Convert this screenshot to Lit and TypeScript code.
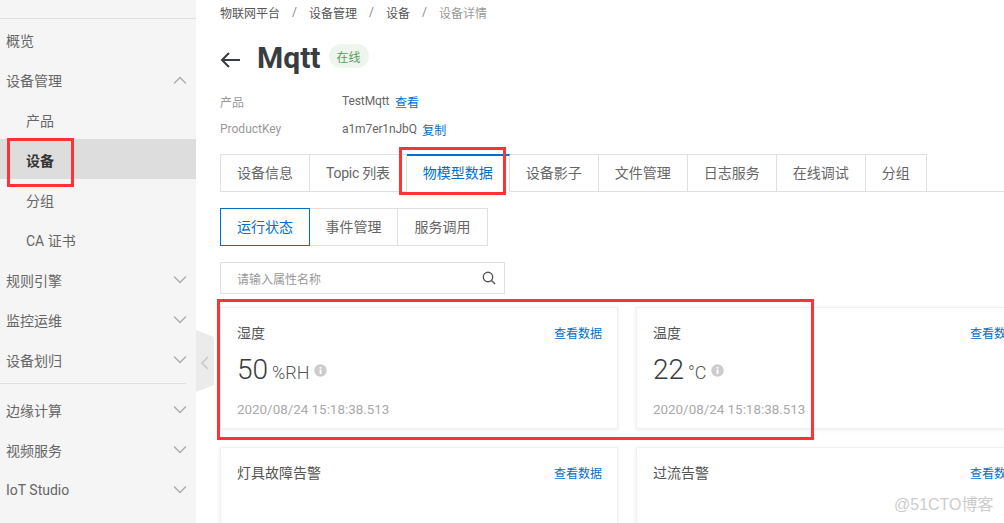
import { LitElement, html, css } from "lit";
import { customElement } from "lit/decorators.js";

const chevron = (up: boolean) => html`<svg class="chev" width="14" height="8" viewBox="0 0 14 8" fill="none" stroke="#aaa" stroke-width="1.3"><path d=${up ? "M1 7.5L7 1.5L13 7.5" : "M1 .5L7 6.5L13 .5"}></path></svg>`;

const info = html`<svg class="info" width="13" height="13" viewBox="0 0 13 13"><circle cx="6.5" cy="6.5" r="6.2" fill="#ccc"></circle><rect x="5.6" y="5.6" width="1.9" height="4.4" fill="#fff"></rect><rect x="5.6" y="3" width="1.9" height="1.7" fill="#fff"></rect></svg>`;

@customElement("app-root")
export class AppRoot extends LitElement {
  static styles = css`
    :host { display: flex; width: 1004px; height: 523px; overflow: hidden; position: relative; background: #fff;
      font-family: Roboto, "Noto Sans CJK SC", sans-serif; font-size: 12px; color: #555; }
    .side { width: 196px; flex: none; background: #f5f5f5; padding-top: 18px; box-sizing: border-box; }
    .topline { height: 1px; background: #e0e0e0; }
    .item { box-sizing: border-box; height: 40px; display: flex; align-items: center; justify-content: space-between; padding: 2px 9px 0 6px; font-size: 14px; color: #666; }
    .sub { padding-left: 26px; }
    .active { background: #ddd; color: #333; font-weight: 700; }
    .sep { height: 1px; background: #e0e0e0; margin: 4px 10px 5px 0; }
    .handle { position: absolute; left: 196px; top: 330px; }
    .main { flex: 1; min-width: 0; padding-left: 24px; overflow: hidden; }
    .crumbs { height: 24px; display: flex; align-items: center; color: #555; }
    .crumbs .sl { width: 29px; text-align: center; color: #888; }
    .crumbs .cur { color: #999; }
    .head { display: flex; align-items: center; height: 36px; margin-top: 16px; }
    .arrow { margin-right: 17px; margin-top: 3px; }
    .title { font-size: 30px; font-weight: 700; color: #373d41; line-height: 36px; }
    .badge { margin-left: 8px; width: 40px; height: 24px; border-radius: 12px; background: #edf5ed; color: #5d9c5d; display: flex; align-items: center; justify-content: center; margin-top: -4px; }
    .meta { margin-top: 11px; }
    .row { height: 28px; display: flex; align-items: center; color: #999; }
    .row .k { width: 122px; }
    .row .v { color: #666; letter-spacing: -.1px; }
    a { color: #0070cc; }
    .row a { margin-left: 5.5px; }
    .tabs { display: flex; margin-top: 11px; border-bottom: 1px solid #e0e0e0; height: 37px; }
    .tab { box-sizing: border-box; height: 38px; display: flex; align-items: center; padding: 0 16px 3px; font-size: 14px; color: #666; border: 1px solid #e0e0e0; border-left: 0; white-space: nowrap; background: #fff; flex: none; }
    .tab:first-child { border-left: 1px solid #e0e0e0; }
    .tab.topic { letter-spacing: -.25px; }
    .tab.on { color: #0070cc; border-top: 2px solid #0070cc; border-bottom-color: #fff; padding: 0 16px 3px; }
    .subs { display: flex; margin-top: 16px; }
    .subs .s { box-sizing: border-box; height: 38px; width: 88px; display: flex; align-items: center; justify-content: center; padding-bottom: 3px; font-size: 14px; color: #666; border: 1px solid #e0e0e0; border-left: 0; }
    .subs .s.on { width: 90px; color: #0070cc; border: 1px solid #0070cc; }
    .subs .s.last { width: 90px; }
    .search { box-sizing: border-box; margin-top: 16px; width: 285px; height: 32px; border: 1px solid #e0e0e0; display: flex; align-items: center; justify-content: space-between; padding: 0 8px 0 16px; color: #999; }
    .grid { display: grid; grid-template-columns: 398px 398px; gap: 18px; margin-top: 13px; width: 814px; }
    .card { box-sizing: border-box; height: 122px; border: 1px solid #f0f0f0; box-shadow: 0 1px 4px rgba(0,0,0,.08); padding: 14px 15px 0 16px; background: #fff; }
    .card.tall { height: 120px; }
    .ct { display: flex; justify-content: space-between; align-items: center; height: 20px; }
    .ct span { font-size: 14px; color: #555; }
    .val { display: flex; align-items: baseline; margin-top: 9px; height: 38px; color: #373d41; }
    .num { font-size: 28px; line-height: 38px; font-weight: 300; }
    .unit { font-size: 18px; margin-left: 4px; color: #555; font-weight: 300; }
    .info { margin-left: 4px; align-self: center; margin-top: 0; }
    .date { margin-top: 12px; color: #aaa; line-height: 18px; font-size: 13.4px; }
    .mark { position: absolute; border: 3px solid #f33; box-sizing: border-box; pointer-events: none; }
    .m1 { left: 7px; top: 138px; width: 67px; height: 49px; }
    .m2 { left: 399px; top: 147px; width: 107px; height: 48px; }
    .m3 { left: 217px; top: 299px; width: 597px; height: 141px; }
    .wm { position: absolute; left: 894px; top: 495px; font-size: 16px; color: #ccc; line-height: 20px; white-space: nowrap; font-family: "Liberation Sans", "Noto Sans CJK SC", sans-serif; }
  `;

  render() {
    const tabs = ["设备信息", "Topic 列表", "物模型数据", "设备影子", "文件管理", "日志服务", "在线调试", "分组"];
    const card = (t: string, n: string, u: string) => html`<div class="card">
      <div class="ct"><span>${t}</span><a>查看数据</a></div>
      <div class="val"><span class="num">${n}</span><span class="unit">${u}</span>${info}</div>
      <div class="date">2020/08/24 15:18:38.513</div></div>`;
    const blank = (t: string) => html`<div class="card tall"><div class="ct"><span>${t}</span><a>查看数据</a></div></div>`;
    return html`
      <aside class="side">
        <div class="topline"></div>
        <div class="item">概览</div>
        <div class="item">设备管理${chevron(true)}</div>
        <div class="item sub">产品</div>
        <div class="item sub active">设备</div>
        <div class="item sub">分组</div>
        <div class="item sub">CA 证书</div>
        <div class="item">规则引擎${chevron(false)}</div>
        <div class="item">监控运维${chevron(false)}</div>
        <div class="item">设备划归${chevron(false)}</div>
        <div class="sep"></div>
        <div class="item">边缘计算${chevron(false)}</div>
        <div class="item">视频服务${chevron(false)}</div>
        <div class="item">IoT Studio${chevron(false)}</div>
      </aside>
      <svg class="handle" width="18" height="62" viewBox="0 0 18 62">
        <path d="M0 0L18 7V55L0 62Z" fill="#ebebeb"></path>
        <path d="M12 27L6 33L12 39" fill="none" stroke="#c8c8c8" stroke-width="1.6"></path>
      </svg>
      <main class="main">
        <div class="crumbs"><span>物联网平台</span><span class="sl">/</span><span>设备管理</span><span class="sl">/</span><span>设备</span><span class="sl">/</span><span class="cur">设备详情</span></div>
        <div class="head">
          <svg class="arrow" width="20" height="16" viewBox="0 0 20 16" fill="none" stroke="#373d41" stroke-width="2"><path d="M20 8H2M9 1L2 8L9 15"></path></svg>
          <span class="title">Mqtt</span><span class="badge">在线</span>
        </div>
        <div class="meta">
          <div class="row"><span class="k">产品</span><span class="v">TestMqtt</span><a>查看</a></div>
          <div class="row"><span class="k">ProductKey</span><span class="v">a1m7er1nJbQ</span><a>复制</a></div>
        </div>
        <div class="tabs">${tabs.map((t, i) => html`<div class="tab ${i === 2 ? "on" : ""} ${i === 1 ? "topic" : ""}">${t}</div>`)}</div>
        <div class="subs"><div class="s on">运行状态</div><div class="s">事件管理</div><div class="s last">服务调用</div></div>
        <div class="search"><span>请输入属性名称</span>
          <svg width="14" height="14" viewBox="0 0 14 14" fill="none" stroke="#555" stroke-width="1.4"><circle cx="6" cy="6" r="4.7"></circle><path d="M9.5 9.5L13 13"></path></svg>
        </div>
        <div class="grid">
          ${card("湿度", "50", "%RH")}
          ${card("温度", "22", "°C")}
          ${blank("灯具故障告警")}
          ${blank("过流告警")}
        </div>
      </main>
      <div class="mark m1"></div><div class="mark m2"></div><div class="mark m3"></div>
      <div class="wm">@51CTO博客</div>
    `;
  }
}
